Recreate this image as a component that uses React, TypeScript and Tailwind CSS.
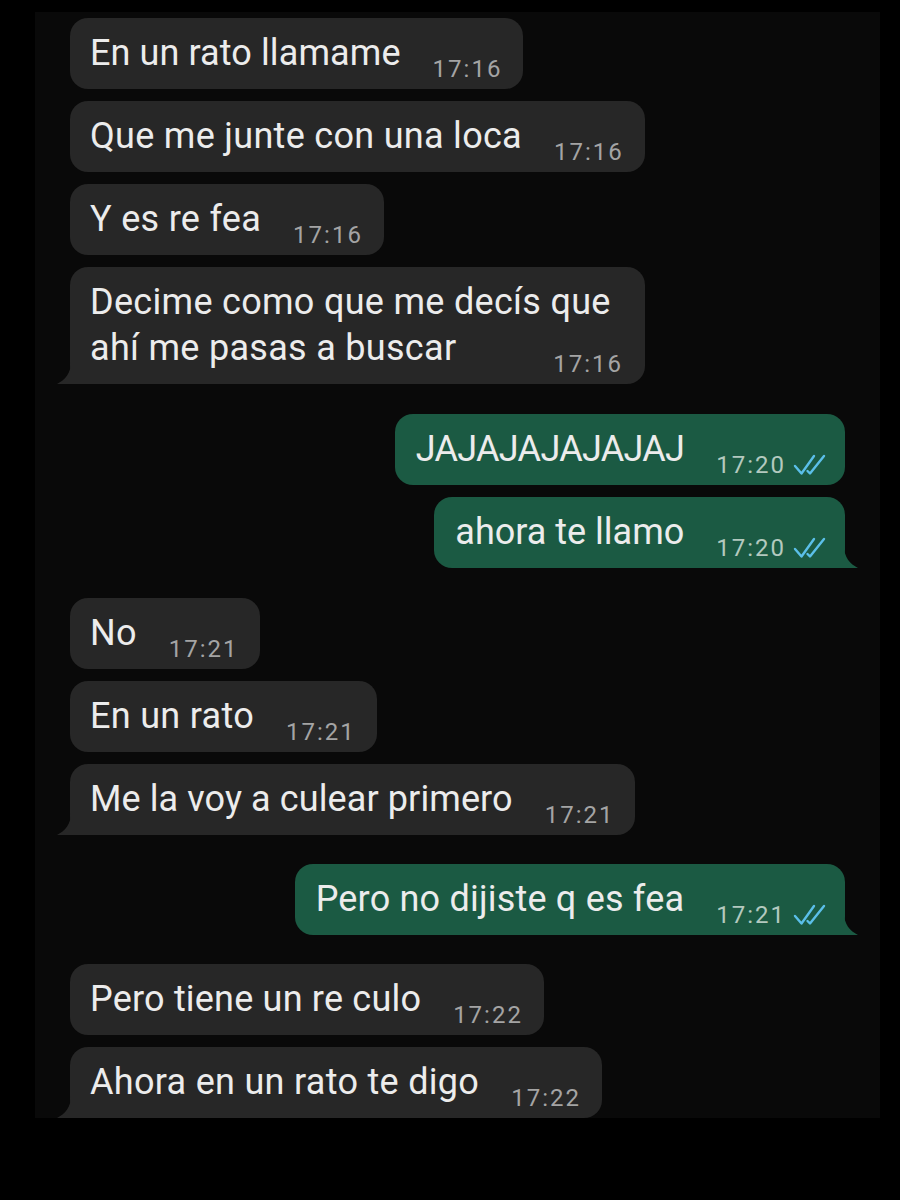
import React from "react";

type Msg = {
  out?: boolean;
  lines: string[];
  time: string;
  tail?: boolean;
  mt: string;
  track?: string;
};

const IN_BG = "#272727";
const OUT_BG = "#1b5a43";

const msgs: Msg[] = [
  { lines: ["En un rato llamame"], time: "17:16", mt: "mt-[6px]", track: "tracking-[0.1px]" },
  { lines: ["Que me junte con una loca"], time: "17:16", mt: "mt-[12px]" },
  { lines: ["Y es re fea"], time: "17:16", mt: "mt-[12px]" },
  { lines: ["Decime como que me decís que", "ahí me pasas a buscar"], time: "17:16", tail: true, mt: "mt-[12px]" },
  { out: true, lines: ["JAJAJAJAJAJAJ"], time: "17:20", mt: "mt-[30px]", track: "tracking-[-0.7px]" },
  { out: true, lines: ["ahora te llamo"], time: "17:20", tail: true, mt: "mt-[12px]", track: "tracking-[0px]" },
  { lines: ["No"], time: "17:21", mt: "mt-[30px]" },
  { lines: ["En un rato"], time: "17:21", mt: "mt-[12px]" },
  { lines: ["Me la voy a culear primero"], time: "17:21", tail: true, mt: "mt-[12px]", track: "tracking-[0.1px]" },
  { out: true, lines: ["Pero no dijiste q es fea"], time: "17:21", tail: true, mt: "mt-[29px]", track: "tracking-[0.2px]" },
  { lines: ["Pero tiene un re culo"], time: "17:22", mt: "mt-[29px]", track: "tracking-[0.2px]" },
  { lines: ["Ahora en un rato te digo"], time: "17:22", tail: true, mt: "mt-[12px]" },
];

function Checks() {
  return (
    <svg width="33" height="22" viewBox="0 0 33 22" className="block">
      <path d="M2 12 L8.5 19.5 L21 2" fill="none" stroke="#5bbfe9" strokeWidth="2.4" strokeLinecap="round" strokeLinejoin="round" />
      <path d="M14.5 17 L17 19.5 L31 2" fill="none" stroke="#5bbfe9" strokeWidth="2.4" strokeLinecap="round" strokeLinejoin="round" />
    </svg>
  );
}

function Time({ out, time }: { out?: boolean; time: string }) {
  return (
    <div className="flex items-end shrink-0 mb-[-5px] ml-[32px]">
      <span
        className={
          "text-[24px] leading-[24px] tracking-[2px] whitespace-nowrap " +
          (out ? "text-[#b3c9bf]" : "text-[#a4a4a4]")
        }
      >
        {time}
      </span>
      {out && (
        <span className="ml-[7px] mb-[1px] flex">
          <Checks />
        </span>
      )}
    </div>
  );
}

function Tail({ out }: { out?: boolean }) {
  if (out) {
    return (
      <svg width="34" height="22" viewBox="0 0 34 22" className="absolute right-[-13px] bottom-0">
        <path d="M20 0 C20 11 26 18 34 22 L0 22 L0 0 Z" fill={OUT_BG} />
      </svg>
    );
  }
  return (
    <svg width="34" height="22" viewBox="0 0 34 22" className="absolute left-[-13px] bottom-0">
      <path d="M14 0 C14 11 8 18 0 22 L34 22 L34 0 Z" fill={IN_BG} />
    </svg>
  );
}

function Bubble({ m }: { m: Msg }) {
  const multi = m.lines.length > 1;
  const textCls =
    "text-[36px] leading-[46px] text-[#ececec] whitespace-nowrap " + (m.track ?? "tracking-[0.3px]");
  return (
    <div className={"flex " + (m.out ? "justify-end " : "justify-start ") + m.mt}>
      <div
        className={
          "relative rounded-[18px] pt-[12px] pb-[13px] " +
          (m.out ? "bg-[#1b5a43] pl-[21px] pr-[19px]" : "bg-[#272727] pl-[20px] pr-[21px]") +
          (multi ? " pr-[22px] min-w-[575px]" : "")
        }
      >
        {m.tail && <Tail out={m.out} />}
        {multi ? (
          <div className="relative flex flex-col">
            {m.lines.slice(0, -1).map((l, i) => (
              <div key={i} className={textCls}>
                {l}
              </div>
            ))}
            <div className="flex items-end justify-between">
              <span className={textCls}>{m.lines[m.lines.length - 1]}</span>
              <Time out={m.out} time={m.time} />
            </div>
          </div>
        ) : (
          <div className="relative flex items-end">
            <span className={textCls}>{m.lines[0]}</span>
            <Time out={m.out} time={m.time} />
          </div>
        )}
      </div>
    </div>
  );
}

export default function App() {
  return (
    <div
      className="w-[900px] h-[1200px] bg-black pt-[12px] pl-[35px] pr-[20px]"
      style={{ fontFamily: "Roboto, 'Liberation Sans', sans-serif" }}
    >
      <div className="h-[1106px] bg-[#090909] overflow-hidden flex flex-col pl-[35px] pr-[35px]">
        {msgs.map((m, i) => (
          <Bubble key={i} m={m} />
        ))}
      </div>
    </div>
  );
}
